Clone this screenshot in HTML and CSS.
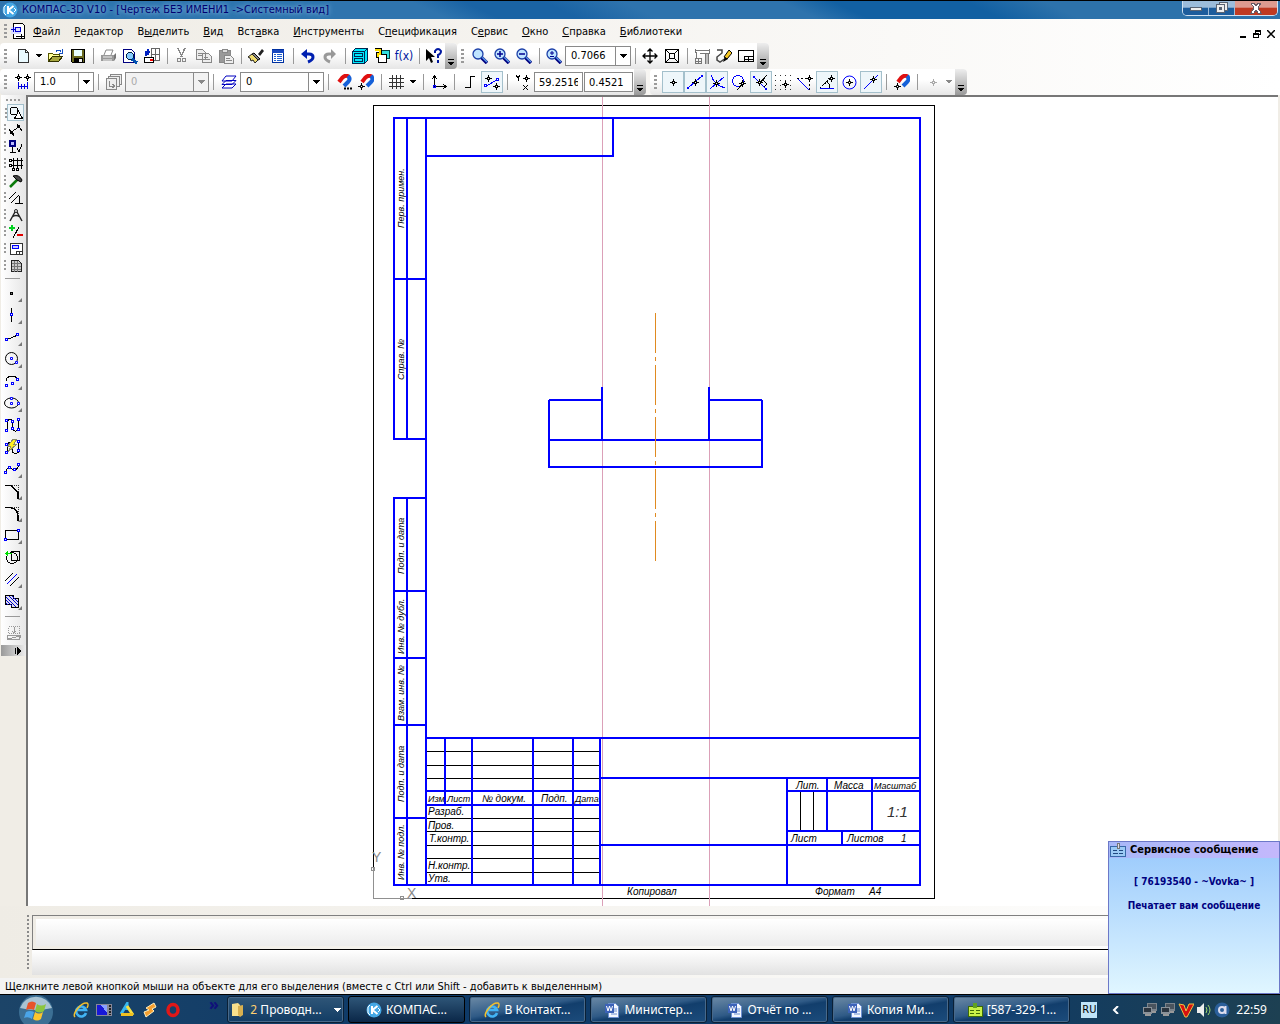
FILE: index.html
```html
<!DOCTYPE html>
<html lang="ru">
<head>
<meta charset="utf-8">
<title>КОМПАС-3D V10</title>
<link rel="stylesheet" href="styles.css">
</head>
<body>
<svg class="defs" aria-hidden="true">
  <defs>
    <symbol id="lens" viewBox="0 0 16 16"><path d="M9 9l6 6" stroke="#000080" stroke-width="3.500"/><path d="M10 9l5 5" stroke="#5a9ae8" stroke-width="1.5"/><circle cx="6" cy="6" r="5" fill="#bfe4ff" stroke="#1c3fa8" stroke-width="1.3"/></symbol>
    <symbol id="star" viewBox="0 0 7 7"><path d="M3.500 0v7M0 3.500h7" stroke="currentColor"/><path d="M2.500 2.500h2v2h-2z" fill="#fff" stroke="currentColor"/></symbol>
    <symbol id="magnet" viewBox="0 0 16 16"><path d="M3 8L6 4Q10 0 13 3" stroke="#e01010" stroke-width="4" fill="none"/><path d="M12 2q3 3 0 6l-4 4" stroke="#1560d8" stroke-width="4" fill="none"/></symbol>
    <symbol id="word" viewBox="0 0 16 16"><path d="M4.500 1.500h7l3 3v11h-10z" fill="#f4f8ff" stroke="#6c8fd0"/><path d="M10 7h3M10 9h3M7 12h6" stroke="#6c8fd0"/><path d="M1 2h9v9H1z" fill="#3c62b8"/><path d="M2.500 4l1.500 5 1.500-5L7 9l1.500-5" stroke="#fff" fill="none"/></symbol>
    <symbol id="ie" viewBox="0 0 16 16"><path d="M13 11A5 5 0 1 1 13 8H4" fill="none" stroke="#42b4f5" stroke-width="2.600"/><path d="M2 15C-1 12 8 0 14 1c2 1 1 3 0 5" fill="none" stroke="#f4c02c" stroke-width="1.500"/></symbol>
    <symbol id="kompas" viewBox="0 0 16 16"><circle cx="8" cy="8" r="7.500" fill="#45a7e4"/><path d="M6 4v8M6.500 8l5-4M6.500 8l5 4" stroke="#fff" stroke-width="2"/><path d="M4 3L2 5v6l2 2M12 6l2 2-2 2" stroke="#fff" fill="none"/></symbol>
    <symbol id="net" viewBox="0 0 16 16"><path d="M5 1h10v8H5z" fill="#7b848c"/><path d="M6 2h8v5H6z" fill="#4a545e"/><path d="M1 5h9v7H1z" fill="#8a9299"/><path d="M2 6h7v4H2z" fill="#2c3640"/><path d="M3 13h6M10 10h4" stroke="#999" stroke-width="2"/></symbol>
    <symbol id="more" viewBox="0 0 6 8"><path d="M0 .5h6" stroke="#000"/><path d="M0 3h6L3 7z" fill="#000"/></symbol>
  </defs>
</svg>

<header class="titlebar">
  <svg class="i smooth"><use href="#kompas"/></svg>
  <h1>КОМПАС-3D V10 - [Чертеж БЕЗ ИМЕНИ1 -&gt;Системный вид]</h1>
  <div class="winbtns">
    <button aria-label="Свернуть"><svg width="14" height="12"><path d="M1.500 5.500h11v3h-11z" fill="#eee" stroke="#5a6474"/></svg></button>
    <button aria-label="Восстановить"><svg width="14" height="12" fill="#eee" stroke="#5a6474"><path d="M4.500.5h8v8h-8z"/><path d="M1.500 2.500h8v8h-8z"/><path d="M4.500 5.500h2v2h-2z" fill="#5a6474"/></svg></button>
    <button class="close" aria-label="Закрыть"><svg width="14" height="12"><path d="M2 1h3l2 3 2-3h3L9 6l3 5H9L7 8l-2 3H2l3-5z" fill="#fff" stroke="#6a5a64"/></svg></button>
  </div>
</header>

<nav class="menubar">
  <span class="grip"></span>
  <svg class="i"><path d="M2.500.5h9l2 2v13h-11z" fill="#fff" stroke="#000"/><path d="M0 4h10v7H0z" fill="#d8dcff"/><path d="M4.500 4.500h5v4h-5zM0 6.500h4M2.500 4v5" stroke="#0000d0" fill="none"/><path d="M5 13.500h8M10.500 11v4" stroke="#000"/></svg>
  <div class="items">
    <button><u>Ф</u>айл</button><button><u>Р</u>едактор</button><button>В<u>ы</u>делить</button><button><u>В</u>ид</button><button>Вст<u>а</u>вка</button><button><u>И</u>нструменты</button><button>С<u>п</u>ецификация</button><button>С<u>е</u>рвис</button><button><u>О</u>кно</button><button><u>С</u>правка</button><button><u>Б</u>иблиотеки</button>
  </div>
  <div class="docbtns">
    <button aria-label="Свернуть документ"><svg width="8" height="8"><path d="M1 7h6" stroke="#000" stroke-width="2"/></svg></button>
    <button aria-label="Восстановить документ"><svg width="8" height="8" fill="none" stroke="#000"><path d="M2.500 2.500v-2h5v4h-2M2 1h6"/><path d="M.5 3.500h5v4h-5zM0 4h6"/></svg></button>
    <button aria-label="Закрыть документ"><svg width="8" height="8" class="smooth"><path d="M0 0l8 8M8 0L0 8" stroke="#000" stroke-width="1.500"/></svg></button>
  </div>
</nav>

<div class="toolrow">
  <div class="toolbar">
    <span class="grip"></span>
    <button class="tb" aria-label="Создать"><svg class="i"><path d="M3.500 1.500h7l3 3v10h-10z" fill="#eafaff" stroke="#333"/><path d="M10.500 1.500v3h3" fill="none" stroke="#333"/></svg></button>
    <button class="dd" aria-label="Варианты"><svg width="7" height="4"><path d="M0 0h6L3 4z"/></svg></button>
    <button class="tb" aria-label="Открыть"><svg class="i"><path d="M.5 13.500v-8h4l1 1h6v2" fill="#ffff9a" stroke="#555500"/><path d="M.5 13.500l4-5h10l-4 5z" fill="#a8a840" stroke="#333300"/><path d="M8 3.500q3-3 5 0M14.500 1v4h-4" stroke="#1450c0" fill="none"/></svg></button>
    <button class="tb" aria-label="Сохранить"><svg class="i"><path d="M1.500 1.500h13v13h-12l-1-1z" fill="#6a6a20" stroke="#000"/><path d="M4 2h8v6H4z" fill="#e8ffff"/><path d="M4 10h9v4H4z"/><path d="M9 11h3v3H9z" fill="#eee"/></svg></button>
    <span class="sep"></span>
    <button class="tb" aria-label="Печать"><svg class="i smooth"><path d="M4 7l2-5h7l-2 5" fill="#fff" stroke="#888"/><path d="M1 7h13v6H1z" fill="#999"/><path d="M3 9h9M3 12h9" stroke="#eee"/><path d="M14 7l2-2v5l-2 3" fill="#777"/></svg></button>
    <button class="tb" aria-label="Предварительный просмотр"><svg class="i"><path d="M1.500 1.500h8l3 3v10h-11z" fill="#fff" stroke="#000080"/><circle cx="8" cy="8" r="3.500" fill="#8cf" stroke="#024"/><path d="M10 11l5 4" stroke="#0050b0" stroke-width="3"/></svg></button>
    <button class="tb" aria-label="Менеджер печати"><svg class="i"><path d="M7.500.5h8v12h-8zM11.500 0v13M8 6.500h8" fill="#fff" stroke="#666"/><path d="M.5 9.500h9v5h-9z" fill="#fff" stroke="#000"/><path d="M6 12h3" stroke="red" stroke-width="2"/><path d="M2 8V4h4M4 1v6" stroke="#0020c0" stroke-width="2" fill="none"/></svg></button>
    <span class="sep"></span>
    <button class="tb" aria-label="Вырезать"><svg class="i" stroke="#888" fill="none"><path d="M4 0l4 9M11 0L7 9" stroke-width="1.500"/><circle cx="5" cy="12" r="2"/><circle cx="10" cy="12" r="2"/></svg></button>
    <button class="tb" aria-label="Копировать"><svg class="i" stroke="#888" fill="#eee"><path d="M.5 1.500h6l3 3v7h-9zM6.500 5.500h6l3 3v6h-9z"/><path d="M2 5.500h4M2 7.500h4M8 9.500h4M8 11.500h6"/></svg></button>
    <button class="tb" aria-label="Вставить"><svg class="i" stroke="#888"><path d="M1.500 2.500h11v12h-11z" fill="#999"/><path d="M4.500 1.500h5v3h-5z" fill="#ddd"/><path d="M6.500 7.500h6l3 3v5h-9z" fill="#eee"/><path d="M8 10.500h4M8 12.500h6"/></svg></button>
    <span class="sep"></span>
    <button class="tb" aria-label="Копировать свойства"><svg class="i smooth"><path d="M10 6l4-5 2 2-4 5z" fill="#222"/><path d="M6 5l6 6-2 1-6-6z" fill="#888" stroke="#000"/><path d="M4 6l6 6-3 3-2-3-2 1-1-3-2-1z" fill="#f0dc70" stroke="#222"/></svg></button>
    <button class="tb" aria-label="Свойства"><svg class="i"><path d="M2.500 1.500h11v13h-11z" fill="#fff" stroke="#0030a0"/><path d="M2 3h12" stroke="#1848c0" stroke-width="3"/><path d="M4 6.500h2M7 6.500h5M4 8.500h2M7 8.500h5M4 10.500h2M7 10.500h5M4 12.500h2M7 12.500h5" stroke="#2060d0"/></svg></button>
    <span class="sep"></span>
    <button class="tb" aria-label="Отменить"><svg class="i smooth"><path d="M4 6h5q4 0 4 3t-5 5" stroke="#0020b0" stroke-width="3" fill="none"/><path d="M1 6l6-5v10z" fill="#0020b0"/></svg></button>
    <button class="tb" aria-label="Повторить"><svg class="i smooth"><path d="M11 6H7q-4 0-4 3t5 5" stroke="#999" stroke-width="3" fill="none"/><path d="M14 6L9 1v10z" fill="#999"/></svg></button>
    <span class="sep"></span>
    <button class="tb" aria-label="Менеджер библиотек"><svg class="i"><path d="M.5 3.500l3-3h12v12l-3 3H.5z" fill="#00e8ff" stroke="#002850"/><path d="M.5 3.500h12v12M12.500 3.500l3-3M2.500 5.500h8v3h-8zM2.500 10.500h8v3h-8z" stroke="#002850" fill="none"/></svg></button>
    <button class="tb" aria-label="Менеджер документа"><svg class="i"><path d="M6.500 2.500h9v8h-9z" fill="#30e0e0" stroke="#044"/><path d="M4.500 6.500h8v8h-8z" fill="#fff" stroke="#000"/><path d="M.5 1.500h6v4h-3v4" stroke="#000" stroke-width="3" fill="none"/><path d="M1 1.500h5v4H3.500v3" stroke="#ffe000" fill="none" stroke-width="2"/></svg></button>
    <button class="tb fx" aria-label="Переменные">f(x)</button>
    <span class="sep"></span>
    <button class="tb" aria-label="Справка"><svg class="i smooth"><path d="M0 1v12l3-3 2 5 2-1-2-5h4z"/><path d="M9 5V3q3-4 6 0 0 3-3 4v3M12 12v3" stroke="#0018a0" stroke-width="2" fill="none"/></svg></button>
    <button class="over" aria-label="Ещё"><svg width="6" height="8"><use href="#more"/></svg></button>
  </div>
  <div class="toolbar">
    <span class="grip"></span>
    <button class="tb" aria-label="Увеличить рамкой"><svg class="i smooth"><use href="#lens"/></svg></button>
    <button class="tb" aria-label="Увеличить"><svg class="i smooth"><use href="#lens"/><path d="M3 6h6M6 3v6" stroke="#000090" stroke-width="1.500"/></svg></button>
    <button class="tb" aria-label="Уменьшить"><svg class="i smooth"><use href="#lens"/><path d="M3 6h6" stroke="#000090" stroke-width="1.500"/></svg></button>
    <span class="sep"></span>
    <button class="tb" aria-label="Масштаб"><svg class="i smooth"><use href="#lens"/><path d="M4 5h4M6 3v4M4 8.500h4" stroke="#000090"/></svg></button>
    <span class="combo c66"><select aria-label="Текущий масштаб"><option>0.7066</option></select><svg width="7" height="4"><path d="M0 0h7L3.500 4z"/></svg></span>
    <span class="sep"></span>
    <button class="tb" aria-label="Сдвинуть"><svg class="i smooth" stroke="#000" fill="none" stroke-width="1.300"><path d="M8 1v14M1 8h14M5.500 3.500L8 1l2.500 2.500M5.500 12.500L8 15l2.500-2.500M3.500 5.500L1 8l2.500 2.500M12.500 5.500L15 8l-2.500 2.500"/></svg></button>
    <button class="tb" aria-label="Показать всё"><svg class="i" stroke="#000" fill="none"><path d="M1.500 1.500h13v13h-13zM5.500 5.500h5v5h-5zM2 2l3 3M14 2l-3 3M2 14l3-3M14 14l-3-3"/></svg></button>
    <span class="sep"></span>
    <button class="tb" aria-label="Каркас"><svg class="i" stroke="#777" fill="none"><path d="M2.500 4v6M1 2.500h14v3H6M1.500 1v4M15.500 1v5"/><path d="M11 5h3v11h-3z" fill="#bbb"/><path d="M1.500 10.500h6v5h-6zM4.500 10v6M1 13h7"/></svg></button>
    <button class="tb" aria-label="Обновить изображение"><svg class="i smooth"><path d="M1 2h5v3L1 9v3l3 2 9-6" stroke="#444" stroke-width="1.500" fill="none"/><path d="M13 2l3 3-5 6-3-2z" fill="#f6c824" stroke="#000"/><path d="M9 9l3 2-5 3z"/></svg></button>
    <button class="tb" aria-label="Основная надпись"><svg class="i" stroke="#000" fill="none"><path d="M.5 2.500h15v11H.5zM6.500 8.500h9M6.500 8v5M10.500 8v5M6 11h10"/></svg></button>
    <button class="over" aria-label="Ещё"><svg width="6" height="8"><use href="#more"/></svg></button>
  </div>
</div>

<div class="toolrow second">
  <div class="toolbar">
    <span class="grip"></span>
    <button class="tb" aria-label="Шаг курсора"><svg class="i"><use href="#star" width="7" height="7"/><use href="#star" x="9" width="7" height="7"/><path d="M3.500 8v7M12.500 8v7M4 12.500h8M6.500 10v5M9.500 10v5" stroke="#0000e0"/></svg></button>
    <span class="combo c60"><select aria-label="Шаг"><option>1.0</option></select><svg width="7" height="4"><path d="M0 0h7L3.500 4z"/></svg></span>
    <span class="sep"></span>
    <button class="tb" aria-label="Вид"><svg class="i" stroke="#888" fill="#eee"><path d="M4.500.5h11v10h-11z"/><path d="M2.500 2.500h11v10h-11z"/><path d="M.5 4.500h10v11H.5z"/><path d="M3.500 7v5h5M6.500 10l2 2-2 2" fill="none"/></svg></button>
    <span class="combo c84 off"><select aria-label="Номер вида" disabled><option>0</option></select><svg width="7" height="4"><path d="M0 0h7L3.500 4z"/></svg></span>
    <span class="sep"></span>
    <button class="tb" aria-label="Слои"><svg class="i smooth" stroke="#0000c0" fill="#fff"><path d="M1 14l4-4h10l-4 4zM1 10.500l4-4h10l-4 4zM1 7l4-5h10l-4 5z"/></svg></button>
    <span class="combo c84"><select aria-label="Слой"><option>0</option></select><svg width="7" height="4"><path d="M0 0h7L3.500 4z"/></svg></span>
    <span class="sep"></span>
    <button class="tb" aria-label="Настройка привязок"><svg class="i smooth"><use href="#magnet" width="16" height="16"/><path d="M8 14.500h2M11 14.500h2M14 14.500h2" stroke="#000" stroke-width="2"/></svg></button>
    <button class="tb" aria-label="Привязки"><svg class="i smooth"><use href="#magnet" x="1" y="0" width="16" height="16"/><use href="#star" y="9" width="7" height="7"/></svg></button>
    <span class="sep"></span>
    <button class="tb" aria-label="Сетка"><svg class="i" stroke="#333"><path d="M3.500 1v14M7.500 1v14M11.500 1v14M0 4.500h15M0 8.500h15M0 12.500h15"/></svg></button>
    <button class="dd" aria-label="Настройка сетки"><svg width="7" height="4"><path d="M0 0h6L3 4z"/></svg></button>
    <span class="sep"></span>
    <button class="tb" aria-label="Локальная СК"><svg class="i" stroke="#000" fill="none"><path d="M3.500 13V2M1 5l2.500-3L6 5M4 12.500h11M12 10l3 2.500-3 2.500"/><path d="M2.500 11.500h2v2h-2z" stroke="#00f"/></svg></button>
    <span class="sep"></span>
    <button class="tb" aria-label="Ортогональное черчение"><svg class="i"><path d="M3 13.500h5v-11h5" stroke="#000" fill="none"/></svg></button>
    <button class="tb on" aria-label="Округление"><svg class="i"><path d="M2 12l11-6" stroke="#00f"/><path d="M.5 10.500h2v2h-2zM12.500 4.500h2v2h-2z" fill="#fff" stroke="#00f"/><use href="#star" x="1" y="1" width="7" height="7"/><use href="#star" x="9" y="9" width="7" height="7"/></svg></button>
    <span class="sep"></span>
    <span class="tb"><svg class="i"><path d="M1 1l2 3 2-3M3 4v3M8 11l5 5M13 11l-5 5" stroke="#000" fill="none"/><use href="#star" x="8" y="1" width="7" height="7"/></svg></span>
    <input aria-label="Координата X" value="59.2516"><input aria-label="Координата Y" value="0.4521">
    <button class="over" aria-label="Ещё"><svg width="6" height="8"><use href="#more"/></svg></button>
  </div>
  <div class="toolbar snap">
    <span class="grip"></span>
    <button class="tb on" aria-label="Ближайшая точка"><svg class="i"><use href="#star" x="5" y="5" width="7" height="7"/></svg></button>
    <button class="tb on" aria-label="Середина"><svg class="i"><path d="M1 14L15 2" stroke="#00f"/><path d="M0 13h2v2H0zM14 1h2v2h-2z" fill="#00f"/><use href="#star" x="5" y="5" width="7" height="7"/></svg></button>
    <button class="tb on" aria-label="Пересечение"><svg class="i"><path d="M1 15L15 3M2 1q3 10 14 13" stroke="#00f" fill="none"/><use href="#star" x="4" y="6" width="7" height="7"/></svg></button>
    <button class="tb" aria-label="Касание"><svg class="i"><circle cx="7" cy="7" r="5.500" stroke="#00f" fill="none"/><path d="M6 16l8-9" stroke="#000"/><use href="#star" x="8" y="6" width="7" height="7"/></svg></button>
    <button class="tb on" aria-label="Нормаль"><svg class="i"><path d="M1 3l12 12" stroke="#00f"/><path d="M0 2h2v2H0zM12 14h2v2h-2z" fill="#00f"/><path d="M7 9l7-8M10 6l4 4-3 3" stroke="#000" fill="none"/><use href="#star" x="3" y="5" width="7" height="7"/></svg></button>
    <button class="tb" aria-label="По сетке"><svg class="i"><path d="M0 1.500h16M0 6.500h16M0 11.500h16M0 15.500h16" stroke="#333" stroke-dasharray="1 4"/><use href="#star" x="7" y="7" width="7" height="7"/></svg></button>
    <button class="tb" aria-label="Выравнивание"><svg class="i"><path d="M0 4.500h16M12.500 2v14" stroke="#000" stroke-dasharray="2 2"/><path d="M1 5l11 11" stroke="#00f"/><use href="#star" x="9" y="1" width="7" height="7"/></svg></button>
    <button class="tb on" aria-label="Угловая привязка"><svg class="i"><path d="M1 14.500h14" stroke="#00f"/><path d="M1 14L12 4" stroke="#000" stroke-dasharray="2 1"/><path d="M8 8q3 2 3 6" stroke="#000" fill="none"/><use href="#star" x="9" y="1" width="7" height="7"/></svg></button>
    <button class="tb" aria-label="Центр"><svg class="i smooth"><circle cx="8.500" cy="8.500" r="6.500" stroke="#00f" fill="none"/><use href="#star" x="5" y="5" width="7" height="7"/></svg></button>
    <button class="tb on" aria-label="Точка на кривой"><svg class="i"><path d="M1 15L15 1" stroke="#00f"/><use href="#star" x="7" y="2" width="7" height="7"/></svg></button>
    <span class="sep"></span>
    <button class="tb" aria-label="Запретить привязки"><svg class="i smooth"><use href="#magnet" x="1" y="0" width="16" height="16"/><use href="#star" y="9" width="7" height="7"/></svg></button>
    <span class="sep"></span>
    <button class="tb dim" aria-label="Локальные привязки"><svg class="i"><use href="#star" x="5" y="5" width="7" height="7"/></svg></button>
    <button class="dd dim" aria-label="Список привязок"><svg width="7" height="4"><path d="M0 0h6L3 4z"/></svg></button>
    <button class="over" aria-label="Ещё"><svg width="6" height="8"><use href="#more"/></svg></button>
  </div>
</div>

<main class="work">
  <aside class="side">
    <span class="hgrip"></span>
    <div class="modes">
      <button class="on" aria-label="Геометрия"><svg class="i"><circle cx="6" cy="6" r="4" stroke="#000" fill="none"/><path d="M10.500 6l4 7.500h-8z" stroke="#000" fill="#fff"/></svg></button>
      <button aria-label="Размеры"><svg class="i"><path d="M2 11l10-7M1 7l5 7M9 2l5 7" stroke="#000"/><path d="M2 12l1-4 3 4zM12 3l-1 4-3-3z"/></svg></button>
      <button aria-label="Обозначения"><svg class="i"><path d="M2 2h5v5H2z" fill="#bbf" stroke="#000080" stroke-width="2"/><path d="M4.500 8v6M2 13.500h6M9 9l2 4 3-8" stroke="#000" fill="none"/></svg></button>
      <button aria-label="Обозначения для строительства"><svg class="i" stroke="#000" fill="none"><path d="M5.500 2v11M9.500 2v11M13.500 2v11M3 4.500h12M3 9.500h12"/><path d="M1.500 3.500h2v2h-2zM1.500 8.500h2v2h-2zM4.500 12.500h2v2h-2zM8.500 12.500h2v2h-2z" fill="#fff"/></svg></button>
      <button aria-label="Редактирование"><svg class="i smooth"><path d="M2 14l8-8" stroke="#0a7a0a" stroke-width="2.500"/><path d="M5 3q6-2 9 4l-1 2-4-2-3-3z" fill="#444" stroke="#000"/></svg></button>
      <button aria-label="Параметризация"><svg class="i" stroke="#000"><path d="M1 9l7-7M3 13l8-8M7 13.500h8M11.500 6v8"/></svg></button>
      <button aria-label="Измерения"><svg class="i smooth" stroke="#222" fill="none"><circle cx="8" cy="4" r="1.500"/><path d="M7 5l-5 9M9 5l5 9M4 10q4-3 8 0" stroke-width="1.500"/></svg></button>
      <button aria-label="Выделение"><svg class="i"><path d="M4 1v6M1 4h6" stroke="#00d020" stroke-width="2"/><path d="M11 3L5 14" stroke="#000"/><path d="M9 11h6" stroke="#e00000" stroke-width="2"/></svg></button>
      <button aria-label="Ассоциативные виды"><svg class="i"><path d="M2.500 2.500h12v11h-12z" fill="#fff" stroke="#333"/><path d="M4 4h7v4H4z" fill="#00f"/><path d="M5 5h5v2H5z" fill="#ccf"/><path d="M8 10.500h7M8.500 10v4M11.500 10v4" stroke="#333"/></svg></button>
      <button aria-label="Спецификация"><svg class="i"><path d="M3.500 2.500h7l3 3v8h-10z" fill="#ccc" stroke="#222"/><path d="M6.500 3v11M9.500 3v11M4 5.500h9M4 8.500h9M4 11.500h9" stroke="#777"/></svg></button>
    </div>
    <hr>
    <div class="tools">
      <button class="fly" aria-label="Точка"><svg class="i"><path d="M6.500 7.500h2v2h-2z" stroke="#000" fill="#777"/></svg></button>
      <button class="fly" aria-label="Вспомогательная прямая"><svg class="i"><path d="M7.500 1v14" stroke="#000"/><path d="M6.500 6.500h2v2h-2z" fill="#fff" stroke="#00f"/></svg></button>
      <button class="fly" aria-label="Отрезок"><svg class="i"><path d="M2 11l12-5" stroke="#000"/><path d="M1.500 9.500h2v2h-2zM12.500 4.500h2v2h-2z" fill="#fff" stroke="#00f"/></svg></button>
      <button class="fly" aria-label="Окружность"><svg class="i smooth"><circle cx="7.500" cy="7.500" r="6" stroke="#000" fill="none"/><path d="M6.500 6.500h2v2h-2zM11.500 10.500h2v2h-2z" fill="#fff" stroke="#00f"/></svg></button>
      <button class="fly" aria-label="Дуга"><svg class="i"><path d="M2 12Q1 3 8 3q4 0 6 4" stroke="#000" fill="none"/><path d="M1.500 11.500h2v2h-2zM12.500 5.500h2v2h-2zM7.500 9.500h2v2h-2z" fill="#fff" stroke="#00f"/></svg></button>
      <button class="fly" aria-label="Эллипс"><svg class="i smooth"><ellipse cx="7.500" cy="8" rx="7" ry="5" stroke="#000" fill="none"/><path d="M6.500 2.500h2v2h-2zM6.500 7.500h2v2h-2zM13.500 7.500h2v2h-2z" fill="#fff" stroke="#00f"/></svg></button>
      <button aria-label="Непрерывный ввод"><svg class="i"><path d="M3.500 13V4q3-4 5 0v8q3 4 6 0V2" stroke="#000" fill="none"/><path d="M1.500 2.500h2v2h-2zM1.500 12.500h2v2h-2zM7.500 3.500h2v2h-2zM7.500 10.500h2v2h-2zM13.500 1.500h2v2h-2zM13.500 11.500h2v2h-2z" fill="#fff" stroke="#00f"/></svg></button>
      <button aria-label="Линия"><svg class="i"><path d="M3.500 14V5q3-4 5 0v8q3 3 6 0V3" stroke="#000" fill="none"/><path d="M9 0h4l-3 5h3L4 13l3-6H4z" fill="#ffee20" stroke="#886"/><path d="M1.500 4.500h2v2h-2zM1.500 12.500h2v2h-2zM13.500 1.500h2v2h-2zM13.500 10.500h2v2h-2z" fill="#fff" stroke="#00f"/></svg></button>
      <button class="fly" aria-label="Кривая Безье"><svg class="i"><path d="M1 12Q5 3 8 8t7-4" stroke="#000" fill="none"/><path d="M.5 10.500h2v2h-2zM4.500 5.500h2v2h-2zM9.500 7.500h2v2h-2zM13.500 2.500h2v2h-2z" fill="#fff" stroke="#00f"/></svg></button>
      <button class="fly" aria-label="Фаска"><svg class="i"><path d="M1 2.500h6l7 7V16" stroke="#000" fill="none" stroke-width="1.500"/><path d="M8 2.500h7M14.500 2v7" stroke="#333" stroke-dasharray="1 1"/></svg></button>
      <button class="fly" aria-label="Скругление"><svg class="i"><path d="M1 2.500h5q8 1 8 10V16" stroke="#000" fill="none" stroke-width="1.500"/><path d="M8 2.500h7M14.500 2v7" stroke="#333" stroke-dasharray="1 1"/></svg></button>
      <button class="fly" aria-label="Прямоугольник"><svg class="i"><path d="M1.500 3.500h13v9h-13z" stroke="#000" fill="none"/><path d="M.5 11.500h2v2h-2zM13.500 2.500h2v2h-2z" fill="#fff" stroke="#00f"/></svg></button>
      <button aria-label="Собрать контур"><svg class="i"><path d="M7.500 2.500h8v9h-8z" stroke="#000" fill="none"/><circle cx="8" cy="9" r="5.500" stroke="#000" fill="none"/><path d="M1 4.500h7" stroke="#0d0"/><path d="M1 4.500l3-3v6z" fill="#0d0"/></svg></button>
      <button class="fly" aria-label="Эквидистанта"><svg class="i"><path d="M1 10L9 2M6 15l9-9" stroke="#000"/><path d="M3 13L13 3" stroke="#00f"/></svg></button>
      <button class="fly" aria-label="Штриховка"><svg class="i"><path d="M1.500 2.500h8v3h5v9h-7v-3h-6z" fill="#dde" stroke="#000"/><path d="M2 4l10 10M2 7l6 6M5 3l9 9M8 3l6 6M2 10l2 2" stroke="#0000d0"/></svg></button>
    </div>
    <hr>
    <button class="last" aria-label="Проекция"><svg class="i" stroke="#999" fill="none"><path d="M2.500 1.500h11v7h-11z" stroke-dasharray="1 1"/><path d="M8 2v6M6 6l2 2 2-2M1.500 10.500h13l-1 4H1.500zM2 14l12-3"/></svg></button>
    <button class="expand" aria-label="Развернуть панель"><svg width="7" height="8"><path d="M.5 1v6" stroke="#000"/><path d="M2 0v8l4-4z"/></svg></button>
  </aside>

  <section class="canvas">
    <svg class="sheet" viewBox="369 97 568 809" role="img" aria-label="Чертёж формата А4">
      <g fill="none" shape-rendering="crispEdges">
        <path d="M373.500 105.500h561v793h-561z" stroke="#000"/>
        <path d="M602.500 97v809M709.500 97v809" stroke="#dba0b8"/>
        <path stroke="#000" d="M427 751.500h173M427 765.500h173M427 778.500h173M427 818.500h173M427 831.500h173M427 845.500h173M427 858.500h173M427 872.500h173M800.500 792v39M813.500 792v39"/>
        <path stroke="#00f" stroke-width="2" d="M393 118h528M394 118v322M407 118v322M426 118v768M393 279h33M393 439h33M920 117v769M426 156h188M613 118v39M393 498h33M394 498v388M407 498v388M393 591h33M393 658h33M393 725h33M393 818h33M393 885h528M426 738h494M445 738v67M472 738v147M533 738v147M573 738v147M600 738v147M427 791h173M427 805h173M600 778h320M787 778v107M827 778v53M872 778v53M787 791h133M787 831h133M842 831v14M600 845h320"/>
        <path stroke="#00f" stroke-width="2" d="M549 400v68M762 400v68M549 400h53M709 400h53M602 387v53M709 387v53M549 440h213M548 467h215"/>
        <path stroke="#e08a20" d="M655.500 313v250" stroke-dasharray="40 4 4 4"/>
        <path stroke="#909090" d="M373.500 867v31.500h38M371.500 867.500h3v3h-3zM400.500 896.500h3v3h-3zM404 898h5"/>
      </g>
      <g class="gost">
        <text x="482" y="802">№ докум.</text><text x="541" y="802">Подп.</text>
        <text x="428" y="815">Разраб.</text><text x="428" y="829">Пров.</text><text x="429" y="842">Т.контр.</text><text x="428" y="869">Н.контр.</text><text x="428" y="882">Утв.</text>
        <text x="796" y="789">Лит.</text><text x="834" y="789">Масса</text>
        <text x="791" y="842">Лист</text><text x="847" y="842">Листов</text><text x="901" y="842">1</text>
        <text x="627" y="895">Копировал</text><text x="815" y="895">Формат</text><text x="869" y="895">А4</text>
        <text x="887" y="817" class="scale">1:1</text>
      </g>
      <g class="gost small">
        <text x="428" y="802">Изм</text><text x="447" y="802">Лист</text><text x="575" y="802">Дата</text><text x="874" y="789">Масштаб</text>
        <text transform="translate(404 228) rotate(-90)">Перв. примен.</text>
        <text transform="translate(404 380) rotate(-90)">Справ. №</text>
        <text transform="translate(404 574) rotate(-90)">Подп. и дата</text>
        <text transform="translate(404 654) rotate(-90)">Инв. № дубл.</text>
        <text transform="translate(404 721) rotate(-90)">Взам. инв. №</text>
        <text transform="translate(404 802) rotate(-90)">Подп. и дата</text>
        <text transform="translate(404 880) rotate(-90)">Инв. № подл.</text>
      </g>
      <g class="axis"><text x="372" y="862">Y</text><text x="407" y="898">X</text></g>
    </svg>
  </section>
</main>

<section class="props">
  <span class="vgrip"></span>
  <div class="panes"><div class="pane"></div><div class="tabs"></div></div>
</section>

<p class="status">Щелкните левой кнопкой мыши на объекте для его выделения (вместе с Ctrl или Shift - добавить к выделенным)</p>

<footer class="taskbar">
  <button class="start" aria-label="Пуск"><svg class="smooth" width="36" height="29" viewBox="0 0 36 29"><circle cx="18" cy="17" r="17" fill="#3c6f94"/><path d="M2 13a17 17 0 0 1 32 0q-16 4-32 0z" fill="#a9c3d3"/><path d="M10 8q4-3 8 0l-2 7q-4-2-8 0z" fill="#e8542a"/><path d="M19 9q4 3 9 0l-2 7q-4 3-9 0z" fill="#8cc63e"/><path d="M8 17q4-2 8 0l-2 7q-4-3-8-1z" fill="#4aa5e8"/><path d="M17 17q4 3 8 0l-2 7q-4 3-8 0z" fill="#fcc62d"/></svg></button>
  <div class="quick">
    <button aria-label="Internet Explorer"><svg class="i smooth"><use href="#ie"/></svg></button>
    <button aria-label="Проигрыватель"><svg class="i"><path d="M0 2h16v12H0z" fill="#889"/><path d="M1 3h10v10H1z" fill="#1818d8"/><path d="M5 3h6v8z" fill="#88a0ff"/><path d="M13.500 3v10" stroke="#222" stroke-width="2" stroke-dasharray="2 1"/></svg></button>
    <button aria-label="AIMP"><svg class="i smooth" fill="none" stroke-width="3"><path d="M2 12L8 2v6" stroke="#38b8f0"/><path d="M8 4l6 9" stroke="#f8e040"/><path d="M2 12.500h12" stroke="#f0c020"/></svg></button>
    <button aria-label="Winamp"><svg class="i smooth"><path d="M12 1L4 6l3 2-5 2 2 5 8-6-2-2 4-2z" fill="#f6a030" stroke="#fff0c0"/></svg></button>
    <button aria-label="Opera"><svg class="i smooth"><ellipse cx="8" cy="8" rx="5" ry="5.500" stroke="#e01818" stroke-width="3.500" fill="none"/></svg></button>
  </div>
  <button class="chev" aria-label="Ещё ярлыки">»</button>
  <div class="tasks">
    <button class="group"><svg class="i smooth"><path d="M2 2l6-1 2 2v11H2z" fill="#f8e08c"/><path d="M8 4l5-1v10l-3 2-2-2z" fill="#d8b050"/></svg><span><b>2</b> Проводн...</span><svg width="7" height="4"><path d="M0 0h7L3.500 4z" fill="#fff"/></svg></button>
    <button class="active"><svg class="i smooth"><use href="#kompas"/></svg><span>КОМПАС...</span></button>
    <button><svg class="i smooth"><use href="#ie"/></svg><span>В Контакт...</span></button>
    <button><svg class="i smooth"><use href="#word"/></svg><span>Министер...</span></button>
    <button><svg class="i smooth"><use href="#word"/></svg><span>Отчёт по ...</span></button>
    <button><svg class="i smooth"><use href="#word"/></svg><span>Копия Ми...</span></button>
    <button><svg class="i"><path d="M1 4h14v10H1z" fill="#c8f048" stroke="#3c6a08"/><path d="M6 1h4v5H6z" fill="#60a020"/><path d="M3 8.500h4M9 8.500h4M3 11.500h4M9 11.500h4" stroke="#3c6a08"/></svg><span>[587-329-1...</span></button>
  </div>
  <div class="tray">
    <button class="lang">RU</button>
    <button class="hide" aria-label="Показать скрытые значки"><svg class="smooth" width="7" height="8"><path d="M6 0L2 4l4 4" stroke="#fff" stroke-width="2" fill="none"/></svg></button>
    <div class="trayicons">
      <svg class="i"><use href="#net"/></svg><svg class="i"><use href="#net"/></svg>
      <svg class="i smooth"><path d="M1 2l5 1 2 6 3-7h5L9 15H7z" fill="#d81010" stroke="#f0c040"/></svg>
      <svg class="i smooth"><path d="M1 5h3l4-4v14l-4-4H1z" fill="#eee"/><path d="M10 5q2 3 0 6M12 3q4 5 0 10" stroke="#9ed870" fill="none"/></svg>
      <svg class="i smooth"><circle cx="8" cy="8" r="7.500" fill="#2b5f9a"/><circle cx="8" cy="8" r="3" fill="none" stroke="#dde" stroke-width="2"/><path d="M11.500 4v8" stroke="#dde" stroke-width="2"/></svg>
    </div>
    <time>22:59</time>
  </div>
</footer>

<aside class="popup">
  <h2><svg class="i"><path d="M.5 4.500h15v10H.5z" fill="#9ccbf5" stroke="#3868a8"/><path d="M7 1h2v5H7z" fill="#dde" stroke="#777"/><path d="M3 8.500h4M9 8.500h4M3 11.500h5M9 11.500h4" stroke="#204880"/></svg>Сервисное сообщение</h2>
  <p>[ 76193540 - ~Vovka~ ]</p>
  <p>Печатает вам сообщение</p>
</aside>
</body>
</html>
```
FILE: styles.css
```css
* { box-sizing: border-box; }
body {
  margin: 0;
  position: relative;
  min-height: 100vh;
  display: flex;
  flex-direction: column;
  background: #f0ede6;
  color: #000;
  font: 11px/14px "DejaVu Sans Condensed", "DejaVu Sans", sans-serif;
}
button {
  display: flex;
  align-items: center;
  justify-content: center;
  padding: 0;
  border: 0;
  background: none;
  color: inherit;
  font: inherit;
}
h1, h2, p { margin: 0; font: inherit; }
svg { flex: none; shape-rendering: crispEdges; }
.smooth { shape-rendering: auto; }
.defs { position: absolute; width: 0; height: 0; }
.i { width: 16px; height: 16px; }

/* Title bar */
.titlebar {
  display: flex;
  align-items: center;
  gap: 4px;
  height: 19px;
  padding-left: 2px;
  border-top: 1px solid #000;
  background: linear-gradient(25deg, #2f74ae 0 34%, #1a63a4 38% 44%, #2e73ad 50% 62%, #1260a2 66% 76%, #2d72ab 82%);
}
.titlebar h1 { color: #000070; text-shadow: 0 0 4px #7fb0dc, 0 0 6px #7fb0dc; }
.winbtns {
  display: flex;
  align-self: flex-start;
  height: 15px;
  margin: 0 2px 0 auto;
  border: 1px solid #cfe0f0;
  border-top: 0;
  border-radius: 0 0 5px 5px;
  overflow: hidden;
}
.winbtns button { width: 26px; border-right: 1px solid #9ebbd8; background: linear-gradient(#9bbcdb 45%, #1c5c9c 50%); }
.winbtns .close { width: 42px; border: 0; background: linear-gradient(#dd9b90 45%, #bf3a22 50%); }

/* Menu */
.menubar, .toolrow { background: linear-gradient(90deg, #efece5, #f5f3ef 40%, #fff); }
.menubar { display: flex; align-items: center; height: 24px; }
.menubar .i { width: 14px; }
.menubar .grip { margin-right: 4px; }
.items { display: flex; padding-left: 1px; }
.items button { padding: 1px 7px 0; }
.docbtns { display: flex; gap: 6px; margin: 6px 5px 0 auto; }

/* Toolbars */
.grip {
  flex: none;
  width: 3px;
  height: 14px;
  margin: 0 5px 0 4px;
  background: repeating-linear-gradient(#9a9a9a 0 2px, transparent 2px 4px);
}
.toolrow { display: flex; height: 26px; }
.toolbar {
  display: flex;
  align-items: center;
  border-radius: 4px;
  background: linear-gradient(#fff 40%, #e6e6e6);
}
.snap { margin-left: 4px; }
.tb { flex: none; display: flex; align-items: center; justify-content: center; width: 22px; height: 22px; }
.on { border: 1px solid #a4c0cc; background: #eef6fa; }
.dim { color: #aaa; }
.dim svg { fill: #888; }
.fx { color: #0018a0; font-size: 12px; }
.dd { width: 11px; height: 22px; }
.sep { flex: none; width: 8px; height: 16px; background: linear-gradient(#999, #999) 4px 0 / 1px 100% no-repeat; }
.second .sep { width: 9px; }
.over {
  align-self: stretch;
  align-items: flex-end;
  width: 12px;
  padding-bottom: 2px;
  border-radius: 0 4px 4px 0;
  background: linear-gradient(#eee, #999);
}
.combo { position: relative; flex: none; height: 20px; }
.c60 { width: 60px; }
.c66 { width: 66px; }
.c84 { width: 84px; }
.combo select {
  appearance: none;
  width: 100%;
  height: 20px;
  padding: 0 18px 0 5px;
  border: 1px solid #8a8a8a;
  border-radius: 0;
  background: linear-gradient(90deg, #8a8a8a, #8a8a8a) right 14px top 0 / 1px 100% no-repeat #fff;
  color: #000;
  font: inherit;
}
.combo svg { position: absolute; right: 4px; top: 8px; pointer-events: none; }
.combo.off select { background-color: #f2f2f2; color: #aaa; opacity: 1; }
.off svg { fill: #888; }
.toolbar input {
  width: 49px;
  height: 20px;
  margin-right: 1px;
  padding: 0 4px;
  border: 1px solid #8a8a8a;
  font: inherit;
}

/* Work area */
.work { flex: 1; display: flex; padding-right: 2px; }
.side {
  flex: none;
  display: flex;
  flex-direction: column;
  width: 26px;
  padding-left: 1px;
}
.side > * { background-image: linear-gradient(90deg, #fff, #e6e6e6); }
.hgrip { height: 9px; position: relative; }
.hgrip::after {
  content: "";
  position: absolute;
  left: 5px;
  top: 4px;
  width: 14px;
  height: 2px;
  background: repeating-linear-gradient(90deg, #9a9a9a 0 2px, transparent 2px 4px);
}
.modes, .tools { display: flex; flex-direction: column; }
.modes button {
  width: 17px;
  height: 17px;
  margin-left: 6px;
  position: relative;
}
.modes button::before {
  content: "";
  position: absolute;
  left: -3px;
  top: 3px;
  width: 2px;
  height: 11px;
  background: repeating-linear-gradient(#9a9a9a 0 2px, transparent 2px 4px);
}
.side hr { width: 25px; height: 8px; margin: 0; border: 0; background: linear-gradient(#999, #999) 4px 4px / 15px 1px no-repeat, linear-gradient(90deg, #fff, #e6e6e6); }
.tools button { position: relative; width: 22px; height: 22px; }
.fly::after {
  content: "";
  position: absolute;
  right: 1px;
  bottom: 2px;
  border: 2px solid;
  border-color: transparent #777 #777 transparent;
}
.last { height: 25px; }
.expand { height: 11px; justify-content: flex-end; padding-right: 4px; background: linear-gradient(90deg, #999, #eee); }
.canvas {
  flex: 1;
  display: flex;
  justify-content: center;
  border: solid #777;
  border-width: 2px 0 0 2px;
  background: #fff;
}
.sheet { width: 568px; height: 809px; }
.gost { font: italic 10px "Liberation Sans", sans-serif; }
.small { font-size: 9px; }
.gost .scale { font-size: 15px; fill: #333; }
.axis { font: 14px "Liberation Sans", sans-serif; fill: #888; }

/* Property panel and status line */
.props { display: flex; gap: 3px; height: 72px; padding: 9px 0 3px 27px; background: linear-gradient(90deg, #efece5, #f8f7f4 60%, #fff); }
.vgrip { flex: none; width: 2px; height: 54px; background: repeating-linear-gradient(#8a8a8a 0 2px, transparent 2px 4px); }
.panes { flex: 1; display: flex; flex-direction: column; }
.pane { height: 35px; border: solid #808080; border-width: 1px 0 1px 1px; border-bottom-color: #000; padding: 3px; background: linear-gradient(#fff, #ececec) content-box #fff; }
.tabs { flex: 1; background: linear-gradient(#fff, #e2e2e2); }
.status { height: 16px; padding-left: 5px; line-height: 17px; background: #f3f3f3; }

/* Taskbar */
.taskbar {
  display: flex;
  align-items: center;
  height: 30px;
  border-top: 1px solid #000;
  background: linear-gradient(90deg, #1c4468, #0e3a68 30%, #0f3a66 75%, #1d4052);
  color: #fff;
  font: 12px/16px "Noto Sans", "Open Sans", sans-serif;
}
.start { width: 36px; margin-left: 18px; }
.quick { display: flex; gap: 7px; margin-left: 19px; }
.chev { width: 14px; margin: 0 6px 12px 26px; color: #10107a; font-size: 16px; font-weight: bold; }
.tasks { flex: 1; display: flex; gap: 4px; min-width: 0; max-width: 843px; }
.tasks button {
  flex: 1 1 0;
  min-width: 0;
  height: 27px;
  gap: 4px;
  border: 1px solid #0a2036;
  border-radius: 3px;
  background: linear-gradient(170deg, #6c8aa6, #2f5a86 45%, #123e6c 55%, #1c4c7c);
  box-shadow: inset 0 0 0 1px #48698a;
  white-space: nowrap;
}
.tasks .active { border-color: #000; background: linear-gradient(#2f5678, #0a2748); box-shadow: none; }
.tasks .group { background: linear-gradient(#2f5678, #123c64); }
.tasks b { color: #ffd070; font-weight: 400; }
.group > svg:last-child { margin-left: 8px; }
.tray { flex: none; display: flex; align-items: center; margin-left: auto; padding-right: 13px; }
.lang { width: 16px; height: 16px; background: #c0e4f8; color: #000; font: 11px/16px "DejaVu Sans Condensed", sans-serif; }
.hide { width: 36px; }
.trayicons { display: flex; gap: 2px; margin: 0 6px 0 9px; }

/* Messenger notification over the desktop corner */
.popup {
  position: absolute;
  right: 0;
  bottom: 30px;
  width: 172px;
  height: 153px;
  border: 1px solid #6c78c8;
  background: linear-gradient(#98c8fc, #e0f6ff);
  color: #000080;
  font: bold 10px/14px "DejaVu Sans Condensed", sans-serif;
  text-align: center;
}
.popup h2 {
  display: flex;
  align-items: center;
  gap: 4px;
  height: 16px;
  padding-left: 1px;
  background: linear-gradient(90deg, #a8b8f8, #c4b8fc);
  color: #000;
  font-weight: bold;
  font-size: 11px;
}
.popup p { margin: 17px 0 -7px; }
```
